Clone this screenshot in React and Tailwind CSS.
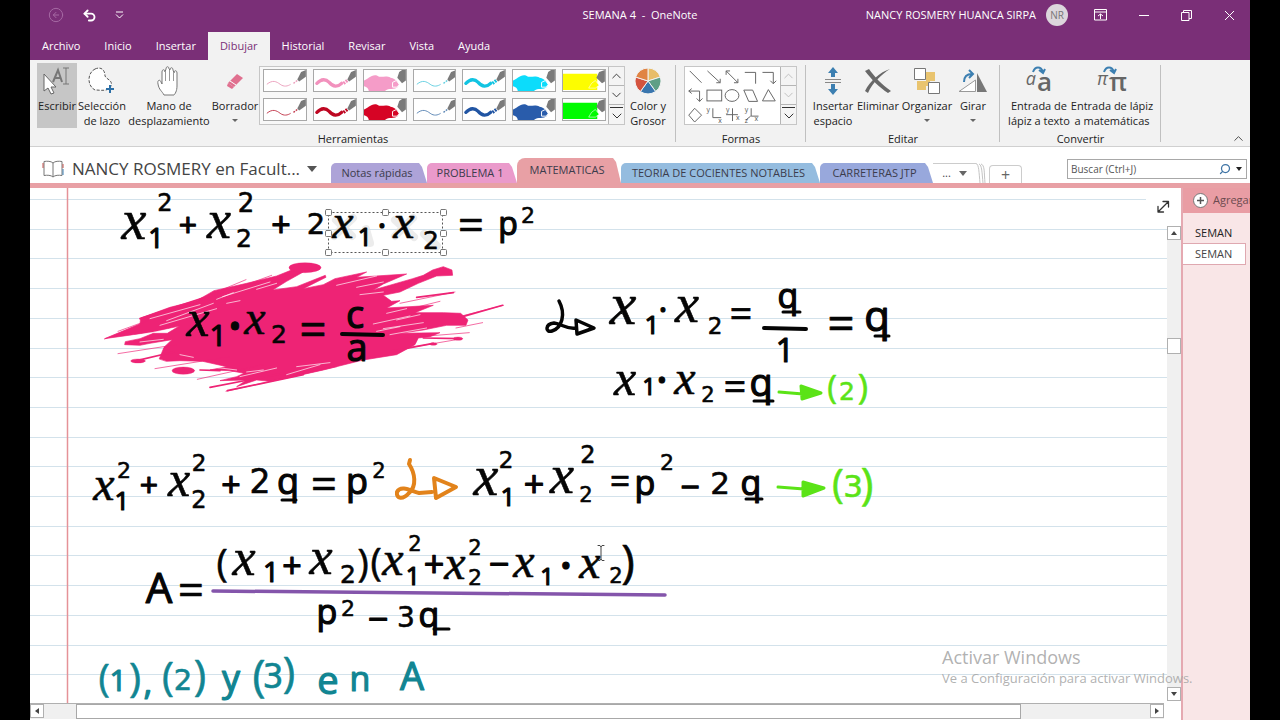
import { ChevronUp, ChevronDown, Undo2, CircleArrowLeft, Search } from 'lucide-react'

const menu = ['Archivo', 'Inicio', 'Insertar', 'Dibujar', 'Historial', 'Revisar', 'Vista', 'Ayuda']

const pens = [
    { kind: 'thin', color: '#eba0bd' },
    { kind: 'medium', color: '#f291bd' },
    { kind: 'thick', color: '#f59cc8' },
    { kind: 'thin', color: '#63cfe0' },
    { kind: 'medium', color: '#12c4e2' },
    { kind: 'thick', color: '#0cdcfb' },
    { kind: 'marker', color: '#fdfd00' },
    { kind: 'thin', color: '#c23a4d' },
    { kind: 'medium', color: '#be0722' },
    { kind: 'thick', color: '#d60425' },
    { kind: 'thin', color: '#5d87b5' },
    { kind: 'medium', color: '#2155a3' },
    { kind: 'thick', color: '#295cab' },
    { kind: 'marker', color: '#00fb00' },
]

// handwritten symbols: character, centre x, baseline, size
const ink = [
    ['x', 134, 239, 56], ['1', 156, 248, 27], ['2', 165, 211, 24], ['+', 188, 237, 32],
    ['x', 219, 238, 54], ['2', 244, 247, 25], ['2', 246, 212, 26], ['+', 281, 237, 34],
    ['2', 316, 234, 29], ['x', 343, 238, 48], ['1', 365, 246, 25], ['·', 382, 238, 34],
    ['x', 404, 238, 48], ['2', 431, 249, 25], ['=', 471, 241, 46], ['p', 508, 235, 32], ['2', 528, 223, 22],

    ['x', 198, 336, 52], ['1', 218, 346, 30], ['•', 235, 339, 34], ['x', 255, 334, 48],
    ['2', 279, 343, 25], ['=', 313, 346, 48], ['c', 355, 328, 38], ['a', 357, 361, 38],

    ['x', 623, 324, 60], ['1', 652, 334, 26], ['·', 663, 322, 34], ['x', 687, 322, 54],
    ['2', 715, 334, 23], ['=', 741, 328, 40], ['q', 788, 308, 34], ['1', 785, 362, 32],
    ['=', 841, 340, 48], ['q', 877, 331, 42],
    ['x', 625, 395, 50], ['1', 649, 395, 23], ['•', 662, 389, 26], ['x', 685, 394, 48],
    ['2', 708, 402, 21], ['=', 735, 401, 40], ['q', 761, 396, 38],

    ['x', 104, 500, 48], ['1', 122, 510, 26], ['2', 124, 478, 22], ['+', 149, 497, 32],
    ['x', 179, 496, 50], ['2', 199, 508, 24], ['2', 199, 471, 23], ['+', 231, 497, 34],
    ['2', 260, 493, 33], ['q', 288, 494, 36], ['=', 324, 500, 46], ['p', 357, 494, 36], ['2', 379, 478, 21],

    ['x', 486, 495, 56], ['1', 508, 506, 26], ['2', 506, 468, 23], ['+', 534, 497, 36],
    ['x', 562, 493, 54], ['2', 586, 502, 21], ['2', 588, 463, 24], ['=', 620, 494, 36],
    ['p', 645, 495, 34], ['2', 667, 470, 22], ['−', 690, 499, 34], ['2', 720, 494, 31], ['q', 751, 495, 34],

    ['A', 159, 603, 42], ['=', 191, 606, 46], ['(', 222, 577, 38], ['x', 244, 575, 52],
    ['1', 271, 582, 28], ['+', 292, 578, 34], ['x', 321, 574, 52], ['2', 348, 583, 25],
    [')', 363, 577, 38], ['(', 376, 576, 38], ['x', 393, 575, 48], ['1', 413, 585, 25],
    ['2', 415, 551, 21], ['+', 434, 577, 36], ['x', 455, 579, 48], ['2', 475, 585, 22],
    ['2', 475, 555, 21], ['−', 499, 577, 36], ['x', 524, 577, 48], ['1', 547, 585, 24],
    ['•', 566, 576, 30], ['x', 590, 578, 48], ['2', 616, 583, 21], [')', 628, 578, 46],
    ['p', 327, 624, 34], ['2', 348, 616, 22], ['−', 378, 632, 36], ['3', 406, 627, 28], ['q', 429, 627, 34],
]

const greenInk = [
    ['(', 832, 399, 33], ['2', 847, 400, 25], [')', 863, 399, 35],
    ['(', 838, 498, 40], ['3', 853, 497, 31], [')', 867, 499, 43],
]

const tealInk = [
    ['(', 104, 692, 38], ['1', 118, 691, 30], [')', 135, 692, 41], [',', 148, 695, 34],
    ['(', 168, 691, 40], ['2', 183, 690, 29], [')', 200, 690, 42], ['y', 231, 691, 36],
    ['(', 259, 691, 44], ['3', 273, 688, 33], [')', 289, 687, 42], ['e', 328, 694, 38],
    ['n', 360, 691, 34], ['A', 412, 690, 38],
]

const handles = [[328, 212], [385, 212], [443, 212], [328, 233], [443, 233], [328, 252], [385, 252], [443, 252]]

function symbolStyle(char) {
    if (char === 'x') return "font-['Liberation_Serif',serif] italic"
    if (char === '2' || char === '3') return "font-['DejaVu_Sans',sans-serif]"
    return "font-['Open_Sans',sans-serif]"
}

function Symbols({ items, color }) {
    return (
        <g fill={color} stroke={color} textAnchor="middle">
            {items.map(([char, x, y, size], i) => (
                <text
                    key={i}
                    x={x}
                    y={y}
                    fontSize={size}
                    strokeWidth={'x=()23'.includes(char) ? 0.6 : 1.2}
                    className={symbolStyle(char)}
                >
                    {char}
                </text>
            ))}
        </g>
    )
}

function Splash() {
    return (
        <g transform="translate(90 188) scale(0.3333)" fill="#ee2375" stroke="#ee2375" strokeLinecap="round">
            <path strokeWidth="2" d="M208 512 L222 478 L246 455 L180 466 L150 472 L104 470 L106 461 L150 452 L190 436 L232 436 L268 414 L190 432 L130 440 L44 452 L150 408 L152 390 L240 358 L320 338 L372 308 L470 286 L560 264 L610 244 L640 252 L590 280 L548 306 L620 296 L706 262 L708 268 L640 302 L700 290 L735 272 L830 252 L800 268 L950 258 L880 288 L850 306 L968 272 L1000 262 L1028 246 L1060 236 L1086 246 L1088 262 L1040 264 L985 286 L930 312 L880 322 L905 340 L930 338 L890 360 L1030 352 L975 374 L1060 374 L1112 376 L1134 396 L1128 412 L1070 412 L1000 426 L930 436 L1050 434 L1020 446 L985 450 L975 470 L920 500 L820 516 L700 546 L610 566 L540 580 L500 576 L440 596 L470 576 L390 578 L440 566 L462 556 L420 548 L360 546 L410 536 L338 520 L270 518 L230 520 Z" />
            <ellipse cx="645" cy="239" rx="48" ry="15" />
            <ellipse cx="280" cy="548" rx="34" ry="11" />
            <ellipse cx="144" cy="519" rx="22" ry="6" />
            <ellipse cx="1104" cy="452" rx="14" ry="5" />
            <ellipse cx="1030" cy="468" rx="11" ry="4" />
            <path fill="none" strokeWidth="2" d="M44 453 L468 275 M84 430 L545 262 M84 497 L260 470 M195 542 L420 506 M322 574 L520 530 M408 610 L740 536 M930 346 L1095 312 M930 370 L1050 340 M940 450 L1138 434 M940 482 L1094 456 M1100 388 L1240 352 M1098 420 L1178 404" />
            <path fill="none" strokeWidth="5" d="M150 392 L400 310 M140 518 L250 492 M360 598 L610 550 M412 608 L640 560 M330 546 L390 548 M980 328 L1090 314 M1118 386 L1238 352 M610 246 L540 290 M900 490 L1030 466 M1000 450 L1110 452" />
            <g stroke="#fff" fill="none" strokeWidth="2">
                <path d="M180 392 L330 350 M230 398 L370 346 M210 412 L380 362 M398 326 L540 282 M410 346 L450 338 M380 334 L430 314 M740 292 L860 264 M800 298 L880 282 M810 320 L880 312 M600 292 L672 270 M120 446 L250 422 M150 462 L220 454 M500 304 L560 286" />
                <path d="M850 408 L960 384 M880 422 L1000 404 M900 440 L1010 420 M920 396 L990 380 M890 376 L950 362 M860 430 L930 416 M340 534 L440 546 M450 566 L560 540 M470 552 L520 546 M590 560 L690 530 M620 536 L720 524 M270 500 L310 508" />
            </g>
        </g>
    )
}

function InkCanvas() {
    return (
        <svg viewBox="30 188 1138 515" className="absolute left-0 top-0 h-[515px] w-[1138px] overflow-visible" strokeLinecap="round" strokeLinejoin="round">
            {Array.from({ length: 17 }).map((_, i) => (
                <line key={i} x1="30" x2={i ? 1167 : 1146} y1={Math.round(199 + i * 29.7) + 0.5} y2={Math.round(199 + i * 29.7) + 0.5} stroke="#d3e2eb" strokeLinecap="butt" />
            ))}
            <line x1="67.5" x2="67.5" y1="188" y2="703" stroke="#e59298" strokeWidth="1.5" strokeLinecap="butt" />
            <Splash />
            <g fill="none" stroke="#d9d9d9" strokeWidth="8" opacity="0.5">
                <path d="M336 220 L352 236 M353 218 L334 236 M395 220 L414 237 M413 218 L395 236 M366 229 L370 243 M424 234 L437 246" />
            </g>
            <Symbols items={ink} color="#050505" />
            <Symbols items={greenInk} color="#5be317" />
            <Symbols items={tealInk} color="#118592" />
            <g fill="none" stroke="#050505" strokeWidth="4">
                <path d="M342 334 L383 335 M764 328 L806 329" />
                <path strokeWidth="3" d="M783 312 L800 312 M875 336 L889 336 M754 401 L773 401 M282 500 L296 500 M746 499 L762 499 M434 629 L449 629" />
                <path strokeWidth="3.5" d="M559 301 C566 314 562 328 552 331 C545 333 545 324 554 323 C562 324 568 330 576 328 M576 320 L594 328 L577 334 Z" />
            </g>
            <path d="M410 460 L409 464 C415 473 417 486 409 493 C403 500 396 499 397 492 C401 484 413 492 419 493 L432 492 M434 478 L456 487 L436 498 Z" fill="none" stroke="#e2831b" strokeWidth="4" />
            <g stroke="#5be317" strokeWidth="3" fill="#5be317">
                <path d="M779 392 L803 394 M801 386 L821 393 L802 399 Z" />
                <path d="M778 487 L804 489 M803 482 L824 488 L803 496 Z" />
            </g>
            <path d="M213 591 L665 595" stroke="#8455ab" strokeWidth="3.5" />
            <rect x="328.5" y="212.5" width="114" height="40" fill="none" stroke="#555" strokeDasharray="2 2" strokeLinecap="butt" />
            {handles.map(([x, y], i) => (
                <rect key={i} x={x - 2.5} y={y - 2.5} width="6" height="6" rx="1" fill="#fff" stroke="#777" />
            ))}
            <path d="M598 545.5 H600 L601 547 L602 545.5 H604 M601 547 V559 M598 560.5 H600 L601 559 L602 560.5 H604" fill="none" stroke="#444" />
            <path d="M1158.500 211.500 L1168 202 M1163 201.500 H1168.500 V207 M1158 206.500 V212 H1163.500" fill="none" stroke="#333" strokeWidth="1.3" />
        </svg>
    )
}

function PenIcon({ kind, color }) {
    return (
        <svg viewBox="0 0 44 22" className="h-full w-full">
            {kind === 'thin' && <path d="M3 15 C9 10 13 12 17 15 C21 18 25 17 28 15" fill="none" stroke={color} />}
            {kind === 'medium' && <path d="M3 14 C8 9 12 9 16 13 C20 18 25 18 29 14" fill="none" stroke={color} strokeWidth="3.5" strokeLinecap="round" />}
            {kind === 'thick' && <path d="M0 11 C4 10 8 4 14 6 C18 9 22 5 28 8 C34 9 38 15 36 17 C32 22 26 18 22 22 H5 C5 18 0 17 0 17 Z" fill={color} />}
            {kind === 'marker' && <path d="M0 4 H36 V21 H0 Z" fill={color} />}
            {(kind === 'thin' || kind === 'medium') && (
                <>
                    <path d="M31 14 L35 11" stroke={color} strokeWidth={kind === 'thin' ? 1.5 : 3.5} strokeDasharray="2 1" />
                    <path d="M35 10 L39 2 L44 0 V7 L37 12 Z" fill="#7a7a7a" />
                </>
            )}
            {kind === 'thick' && (
                <>
                    <path d="M35 8 L37 2 L40 0 H44 V11 L40 14 Z" fill="#7a7a7a" />
                    <path d="M30 18 L30 13 L34 11 L37 15 L35 18 Z" fill={color} stroke="#fff" />
                </>
            )}
            {kind === 'marker' && (
                <>
                    <path d="M35 8 L38 2 L44 0 V12 L41 14 Z" fill="#7a7a7a" />
                    <path d="M27 19 L30 14 L34 11 L38 16 L34 19 Z" fill={color} stroke="#fff" strokeOpacity="0.6" />
                </>
            )}
        </svg>
    )
}

function Scroller({ muted }) {
    const tone = muted ? 'text-[#bdbdbd]' : 'text-[#333]'
    return (
        <div className="flex w-[16px] shrink-0 flex-col divide-y divide-[#b5b5b5] border-l border-[#b5b5b5] bg-[#f4f4f4]">
            <button aria-label="Subir" className={`flex flex-1 items-center justify-center ${tone}`}><ChevronUp size={18} strokeWidth={1.5} /></button>
            <button aria-label="Bajar" className={`flex flex-1 items-center justify-center ${tone}`}><ChevronDown size={18} strokeWidth={1.5} /></button>
            <button aria-label="Más" className="flex flex-1 flex-col items-center justify-center text-[#333]">
                <span className="mt-[2px] h-px w-[13px] shrink-0 bg-[#333]"></span>
                <ChevronDown size={16} strokeWidth={1.5} />
            </button>
        </div>
    )
}

function Tool({ icon, lines, width, active, arrow }) {
    return (
        <button className={`mt-[3px] flex h-[65px] shrink-0 flex-col items-center whitespace-nowrap text-[11px] leading-[15px] text-[#222] ${width} ${active ? 'bg-[#c6c6c6]' : ''}`}>
            <span className="flex h-[35px] items-center justify-center">{icon}</span>
            {lines.map((line) => <span key={line}>{line}</span>)}
            {arrow && <span className="mt-[6px] border-x-[3px] border-t-[3px] border-x-transparent border-t-[#666]"></span>}
        </button>
    )
}

function Group({ label, width, pad, children }) {
    return (
        <section aria-label={label} className={`relative flex shrink-0 flex-col ${width}`}>
            <div className={`flex h-[71px] ${pad}`}>{children}</div>
            <div className="text-center text-[11px] leading-[15px] text-[#222]">{label}</div>
            <div className="absolute right-0 top-[5px] h-[77px] w-px bg-[#c0c0c0]"></div>
        </section>
    )
}

const icons = {
    type: (
        <svg width="30" height="30" viewBox="0 0 30 30">
            <path d="M11 16 L16 4 L20 16 M13 12 H19" fill="none" stroke="#777" strokeWidth="2" />
            <path d="M21 2 H27 M24 2 V18 M21 18 H27" fill="none" stroke="#777" />
            <path d="M2 8 V25 L6 22 L9 28 L12 27 L9 21 H14 Z" fill="#fff" stroke="#666" />
        </svg>
    ),
    lasso: (
        <svg width="30" height="30" viewBox="0 0 30 30">
            <path d="M8 3 C15 0 18 5 18 10 C20 14 26 14 24 20 C21 26 14 24 8 24 C0 20 0 7 8 3 Z" fill="#fff" stroke="#555" strokeDasharray="3 1.5" />
            <path d="M23 19 V27 M19 23 H27" stroke="#2c6fa6" strokeWidth="2" />
        </svg>
    ),
    hand: (
        <svg width="26" height="32" viewBox="0 0 26 32">
            <path d="M8 30 C6 26 3 25 2 19 C1 15 4 14 5 17 L6 19 L6 7 C6 4 9 4 9 7 L10 4 C10 1 13 1 13 4 L14 5 C14 2 17 2 17 5 L18 8 C18 5 21 5 21 8 V21 C21 26 19 29 18 30 Z" fill="#fff" stroke="#777" />
            <path d="M9.500 6 V16 M13.500 5 V16 M17.500 7 V16" stroke="#999" />
        </svg>
    ),
    eraser: (
        <svg width="18" height="18" viewBox="0 0 18 18">
            <path d="M2 11 L11 2 L17 6 L8 15 Z" fill="#e0708f" />
            <path d="M2 11 L8 15 L6 17 L1 14 Z" fill="#e0708f" />
            <path d="M4 9 L10 13" stroke="#fff" />
        </svg>
    ),
    wheel: (
        <svg width="28" height="28" viewBox="0 0 28 28" stroke="#f2f2f2">
            <path d="M14 14 V1 A13 13 0 0 1 26.400 10 Z" fill="#e8bd68" />
            <path d="M14 14 L26.400 10 A13 13 0 0 1 21.600 24.500 Z" fill="#5f9f86" />
            <path d="M14 14 L21.600 24.500 A13 13 0 0 1 6.400 24.500 Z" fill="#3a76ae" />
            <path d="M14 14 L6.400 24.500 A13 13 0 0 1 1.600 10 Z" fill="#d4533f" />
            <path d="M14 14 L1.600 10 A13 13 0 0 1 14 1 Z" fill="#e08444" />
        </svg>
    ),
    space: (
        <svg width="18" height="30" viewBox="0 0 18 30">
            <path d="M9 1 L14 7 H11 V11 H7 V7 H4 Z M9 29 L14 23 H11 V18 H7 V23 H4 Z" fill="#3c7fb1" />
            <path d="M1 13.500 H17 M1 16.500 H17" stroke="#888" />
        </svg>
    ),
    remove: (
        <svg width="28" height="28" viewBox="0 0 28 28">
            <path d="M1 4 L5 2 C10 9 18 18 27 24 L24 26 C16 21 7 12 1 4 Z" fill="#686868" />
            <path d="M26 2 C18 7 8 16 4 26 L1 24 C6 14 16 5 26 2 Z" fill="#686868" />
        </svg>
    ),
    arrange: (
        <svg width="28" height="28" viewBox="0 0 28 28">
            <path d="M13 5 H22 V14 H13 Z M4 14 H13 V23 H4 Z" fill="#e9c46f" />
            <path d="M13 14 H17 V19 H13 Z" fill="#e9c46f" />
            <path d="M1.500 1.500 H12.500 V12.500 H1.500 Z M15.500 15.500 H26.500 V26.500 H15.500 Z" fill="#fff" stroke="#777" />
        </svg>
    ),
    rotate: (
        <svg width="30" height="26" viewBox="0 0 30 26">
            <path d="M1 23.500 H17.500 V12 Z" fill="#fff" stroke="#999" />
            <path d="M19 5 V24 H29 Z" fill="#777" />
            <path d="M6 14 C6 8 9 6 14 6 M11 2 L15 6 L11 10" fill="none" stroke="#3c7fb1" strokeWidth="2" />
        </svg>
    ),
}

function Convert({ char }) {
    return (
        <span className="relative flex items-end gap-px text-[#666]">
            <svg width="14" height="9" viewBox="0 0 14 9" className="absolute left-[6px] top-0">
                <path d="M1 6 C3 0 9 0 11 6 M7 4 L11 7 L13 3" fill="none" stroke="#3c7fb1" strokeWidth="2" />
            </svg>
            <span className="mb-[8px] text-[18px] italic leading-[20px]">{char}</span>
            <span className="text-[26px] font-semibold leading-[30px]">{char}</span>
        </span>
    )
}

function ShapesIcon() {
    return (
        <svg viewBox="0 0 95 58" className="h-[57px] w-[95px] bg-white" fill="none" stroke="#666">
            <path d="M4 4 L16 16" />
            <path d="M22 4 L35 16 M35 12 V16 H31" />
            <path d="M41 4 L53 16 M41 8 V4 H45 M53 12 V16 H49" />
            <path d="M60 5.500 H71 V17 M78 5.500 H89 V17 M86 14 L89 17 L92 14" />
            <path d="M3 24.500 H14 V35 M6 22 L3 24.500 L6 27 M11 32 L14 35 L17 32" />
            <rect x="21.5" y="23.5" width="15" height="11" />
            <ellipse cx="47" cy="29" rx="7" ry="6" />
            <path d="M59 23.500 H68 L73 35 H64 Z M84 23 L91 34.500 H78 Z M9 42 L16 49 L9 56 L3 49 Z" />
            <path d="M27.500 42 V51.500 H36 M47.500 42 V55 M41 48.500 H53 M66.500 42 V50 H74 M66 50 L61 54" />
            <g fill="#555" stroke="none" className="text-[7px]">
                <text x="21" y="46">y</text>
                <text x="33" y="57">x</text>
                <text x="41" y="46">y</text>
                <text x="51" y="54">x</text>
                <text x="60" y="46">y</text>
                <text x="60" y="57">z</text>
                <text x="70" y="55">x</text>
            </g>
        </svg>
    )
}

function TitleBar() {
    return (
        <header className="grid h-[30px] shrink-0 grid-cols-3 items-center text-[11px] text-white">
            <div className="flex items-center gap-[18px] pl-[18px]">
                <button aria-label="Atrás" className="text-[#a569a3]"><CircleArrowLeft size={16} strokeWidth={1.5} /></button>
                <button aria-label="Deshacer"><Undo2 size={15} strokeWidth={3} /></button>
                <button aria-label="Personalizar">
                    <svg width="9" height="8" viewBox="0 0 9 8" fill="none" stroke="#fff"><path d="M1 1 H8 M1 3.500 L4.500 7 L8 3.500" /></svg>
                </button>
            </div>
            <h1 className="whitespace-pre text-center">SEMANA 4  -  OneNote</h1>
            <div className="flex items-center justify-end whitespace-nowrap pr-[15px]">
                <span>NANCY ROSMERY HUANCA SIRPA</span>
                <span className="ml-[10px] flex size-[22px] items-center justify-center rounded-full bg-[#dcd6dc] text-[10px] text-[#777]">NR</span>
                <button aria-label="Opciones de la cinta" className="ml-[26px]">
                    <svg width="13" height="12" viewBox="0 0 13 12" fill="none" stroke="#fff"><path d="M.5 .5 H12.500 V11 H.5 Z M.5 3 H12.500 M6.500 10 V5 M4 7 L6.500 5 L9 7" /></svg>
                </button>
                <button aria-label="Minimizar" className="ml-[32px] h-px w-[10px] bg-white"></button>
                <button aria-label="Restaurar" className="ml-[32px]">
                    <svg width="11" height="11" viewBox="0 0 11 11" fill="none" stroke="#fff"><path d="M.5 2.500 H8 V10.500 H.5 Z M2.500 2.500 V.5 H10.500 V8.500 H8" /></svg>
                </button>
                <button aria-label="Cerrar" className="ml-[32px]">
                    <svg width="11" height="11" viewBox="0 0 11 11" stroke="#fff"><path d="M1 1 L10 10 M10 1 L1 10" /></svg>
                </button>
            </div>
        </header>
    )
}

function Ribbon() {
    return (
        <div className="relative flex h-[87px] shrink-0 border-b border-[#d0d0d0] bg-[#f2f2f2]">
            <Group label="Herramientas" width="w-[646px]" pad="pl-[7px]">
                <Tool icon={icons.type} lines={['Escribir']} width="w-[40px]" active />
                <Tool icon={icons.lasso} lines={['Selección', 'de lazo']} width="w-[50px]" />
                <Tool icon={icons.hand} lines={['Mano de', 'desplazamiento']} width="w-[84px]" />
                <Tool icon={icons.eraser} lines={['Borrador']} width="w-[48px]" arrow />
                <div className="mt-[6px] flex h-[59px] w-[366px] shrink-0 border border-[#c6c6c6] bg-[#f8f8f8]">
                    <div className="grid flex-1 grid-cols-7 content-start gap-[6px] pl-[3px] pr-[2px] pt-[2px]">
                        {pens.map((pen, i) => (
                            <button key={i} aria-label={`Lápiz ${i + 1}`} className="h-[23px] overflow-hidden border border-[#a8a8a8] bg-white">
                                <PenIcon {...pen} />
                            </button>
                        ))}
                    </div>
                    <Scroller />
                </div>
                <Tool icon={icons.wheel} lines={['Color y', 'Grosor']} width="w-[46px]" />
            </Group>
            <Group label="Formas" width="w-[130px]" pad="pl-[8px]">
                <div className="mt-[6px] flex h-[59px] border border-[#c6c6c6] bg-white">
                    <ShapesIcon />
                    <Scroller muted />
                </div>
            </Group>
            <Group label="Editar" width="w-[194px]" pad="pl-[4px]">
                <Tool icon={icons.space} lines={['Insertar', 'espacio']} width="w-[46px]" />
                <Tool icon={icons.remove} lines={['Eliminar']} width="w-[44px]" />
                <Tool icon={icons.arrange} lines={['Organizar']} width="w-[54px]" arrow />
                <Tool icon={icons.rotate} lines={['Girar']} width="w-[38px]" arrow />
            </Group>
            <Group label="Convertir" width="w-[161px]" pad="pl-[4px]">
                <Tool icon={<Convert char="a" />} lines={['Entrada de', 'lápiz a texto']} width="w-[70px]" />
                <Tool icon={<Convert char="π" />} lines={['Entrada de lápiz', 'a matemáticas']} width="w-[76px]" />
            </Group>
            <button aria-label="Contraer la cinta" className="ml-auto mr-[4px] self-end text-[#444]"><ChevronUp size={15} strokeWidth={1.5} /></button>
        </div>
    )
}

function SectionTab({ label, style }) {
    return (
        <button className={`shrink-0 whitespace-nowrap rounded-tl-[5px] pr-[4px] text-[11px] text-[#3c3c4c] [clip-path:polygon(0_0,calc(100%-8px)_0,calc(100%-5px)_4px,100%_100%,0_100%)] ${style}`}>
            {label}
        </button>
    )
}

function NotebookBar() {
    return (
        <nav className="flex h-[41px] shrink-0 items-end border-b-[5px] border-[#e8a0a5] bg-white">
            <button className="flex h-full w-[301px] shrink-0 items-center whitespace-nowrap pl-[12px] pt-[8px] text-[17px] text-[#444]">
                <svg width="22" height="18" viewBox="0 0 22 18" fill="none" stroke="#777" className="mr-[8px] shrink-0">
                    <path d="M11 3 C9 1 5 1 2 1.500 V15.500 C5 15 9 15 11 17 C13 15 17 15 20 15.500 V1.500 C17 1 13 1 11 3 V17" />
                    <path d="M1 3 V8 M21 4 V8" stroke="#c0504d" />
                    <path d="M21 9 V15" stroke="#3c7fb1" />
                </svg>
                NANCY ROSMERY en Facult...
                <span className="ml-[7px] border-x-[5px] border-t-[6px] border-x-transparent border-t-[#555]"></span>
            </button>
            <SectionTab label="Notas rápidas" style="h-[20px] w-[96px] bg-[#ada3d8]" />
            <SectionTab label="PROBLEMA 1" style="h-[20px] w-[90px] bg-[#ea9acb]" />
            <SectionTab label="MATEMATICAS" style="h-[25px] w-[104px] bg-[#e8a0a5] rounded-tl-[8px]" />
            <SectionTab label="TEORIA DE COCIENTES NOTABLES" style="h-[20px] w-[199px] bg-[#94bcdf]" />
            <SectionTab label="CARRETERAS JTP" style="h-[20px] w-[113px] bg-[#98a8dc]" />
            <button className="flex h-[20px] w-[43px] items-center justify-center gap-[8px] border-t border-[#ccc] text-[11px] text-[#444]">
                ...
                <span className="border-x-[4px] border-t-[5px] border-x-transparent border-t-[#666]"></span>
            </button>
            <svg width="10" height="20" viewBox="0 0 10 20" fill="none" stroke="#c4c4c4" className="shrink-0">
                <path d="M0 .5 C3 1 3 10 4 20 M3 1 C6 2 6 10 7 20 M5 1 C9 2 8 10 9 20" />
            </svg>
            <button aria-label="Nueva sección" className="ml-[3px] flex h-[18px] w-[33px] items-center justify-center rounded-t-[4px] border border-b-0 border-[#ccc] text-[16px] leading-[16px] text-[#666]">+</button>
            <div className="mb-[4px] ml-auto mr-[3px] flex h-[20px] w-[180px] shrink-0 items-center border border-[#a8a8a8] pl-[3px]">
                <label htmlFor="search" className="sr-only">Buscar</label>
                <input id="search" placeholder="Buscar (Ctrl+J)" className="h-full min-w-0 flex-1 text-[10px] placeholder:text-[#555]" />
                <button aria-label="Buscar" className="flex items-center gap-[5px] pr-[4px]">
                    <Search size={12} strokeWidth={2.5} className="-scale-x-100 text-[#3f74a5]" />
                    <span className="border-x-[3px] border-t-[4px] border-x-transparent border-t-[#222]"></span>
                </button>
            </div>
        </nav>
    )
}

function ScrollButton({ label, path }) {
    return (
        <button aria-label={label} className="flex size-[14px] shrink-0 items-center justify-center border border-[#b0b0b0] bg-white">
            <svg width="8" height="8" viewBox="0 0 8 8" fill="#444"><path d={path} /></svg>
        </button>
    )
}

export default function App() {
    return (
        <div className="h-screen overflow-hidden bg-black px-[30px] font-['Open_Sans',sans-serif]">
            <div className="relative flex h-full flex-col overflow-hidden bg-[#7a2f77]">
                <TitleBar />
                <nav className="mt-[2px] flex h-[28px] shrink-0 text-[11px] text-white">
                    {menu.map((item) => (
                        <button key={item} className={`px-[12px] ${item === 'Dibujar' ? 'bg-[#f2f2f2] text-[#7a2f77]' : ''}`}>{item}</button>
                    ))}
                </nav>
                <Ribbon />
                <NotebookBar />
                <div className="flex min-h-0 flex-1 bg-white">
                    <main className="flex min-w-0 flex-1 flex-col">
                        <div className="flex min-h-0 flex-1">
                            <div className="relative min-w-0 flex-1">
                                <InkCanvas />
                            </div>
                            <div className="mb-[2px] mt-[38px] flex w-[14px] flex-col bg-[#f0f0f0]">
                                <ScrollButton label="Arriba" path="M4 2 L7 6 H1 Z" />
                                <div className="mt-[98px] h-[16px] border border-[#b0b0b0] bg-white"></div>
                                <div className="flex-1"></div>
                                <ScrollButton label="Abajo" path="M1 2 H7 L4 6 Z" />
                            </div>
                        </div>
                        <div className="mb-px mr-[17px] flex h-[16px] shrink-0 border-t border-[#b0b0b0] bg-[#f0f0f0]">
                            <ScrollButton label="Izquierda" path="M6 1 V7 L2 4 Z" />
                            <div className="ml-[32px] h-[15px] w-[945px] border border-[#a8a8a8] bg-white"></div>
                            <div className="flex-1"></div>
                            <ScrollButton label="Derecha" path="M2 1 L6 4 L2 7 Z" />
                        </div>
                    </main>
                    <aside className="w-[69px] shrink-0 overflow-hidden border-l-2 border-[#e5a9b1] bg-[#f9e6e7] text-[11px] text-[#444]">
                        <button className="flex h-[25px] items-center gap-[5px] whitespace-nowrap bg-[#e99da4] pl-[10px] pr-[20px] text-[#6b4a4e]">
                            <svg width="15" height="15" viewBox="0 0 15 15" className="shrink-0">
                                <circle cx="7.5" cy="7.5" r="7" fill="#fff" stroke="#777" />
                                <path d="M7.500 4 V11 M4 7.500 H11" stroke="#555" strokeWidth="1.5" />
                            </svg>
                            Agregar
                        </button>
                        <button className="mt-[10px] block h-[20px] w-[64px] pl-[12px] text-left text-[#222]">SEMAN</button>
                        <button className="-ml-[2px] block h-[22px] w-[65px] border border-l-0 border-[#dfa8b0] bg-white pl-[14px] text-left">SEMAN</button>
                    </aside>
                </div>
                <div className="pointer-events-none absolute left-[912px] top-[645px] whitespace-nowrap text-[#a8a8a8]/90">
                    <div className="text-[18px] leading-[24px]">Activar Windows</div>
                    <div className="text-[13px] leading-[18px]">Ve a Configuración para activar Windows.</div>
                </div>
            </div>
        </div>
    )
}
